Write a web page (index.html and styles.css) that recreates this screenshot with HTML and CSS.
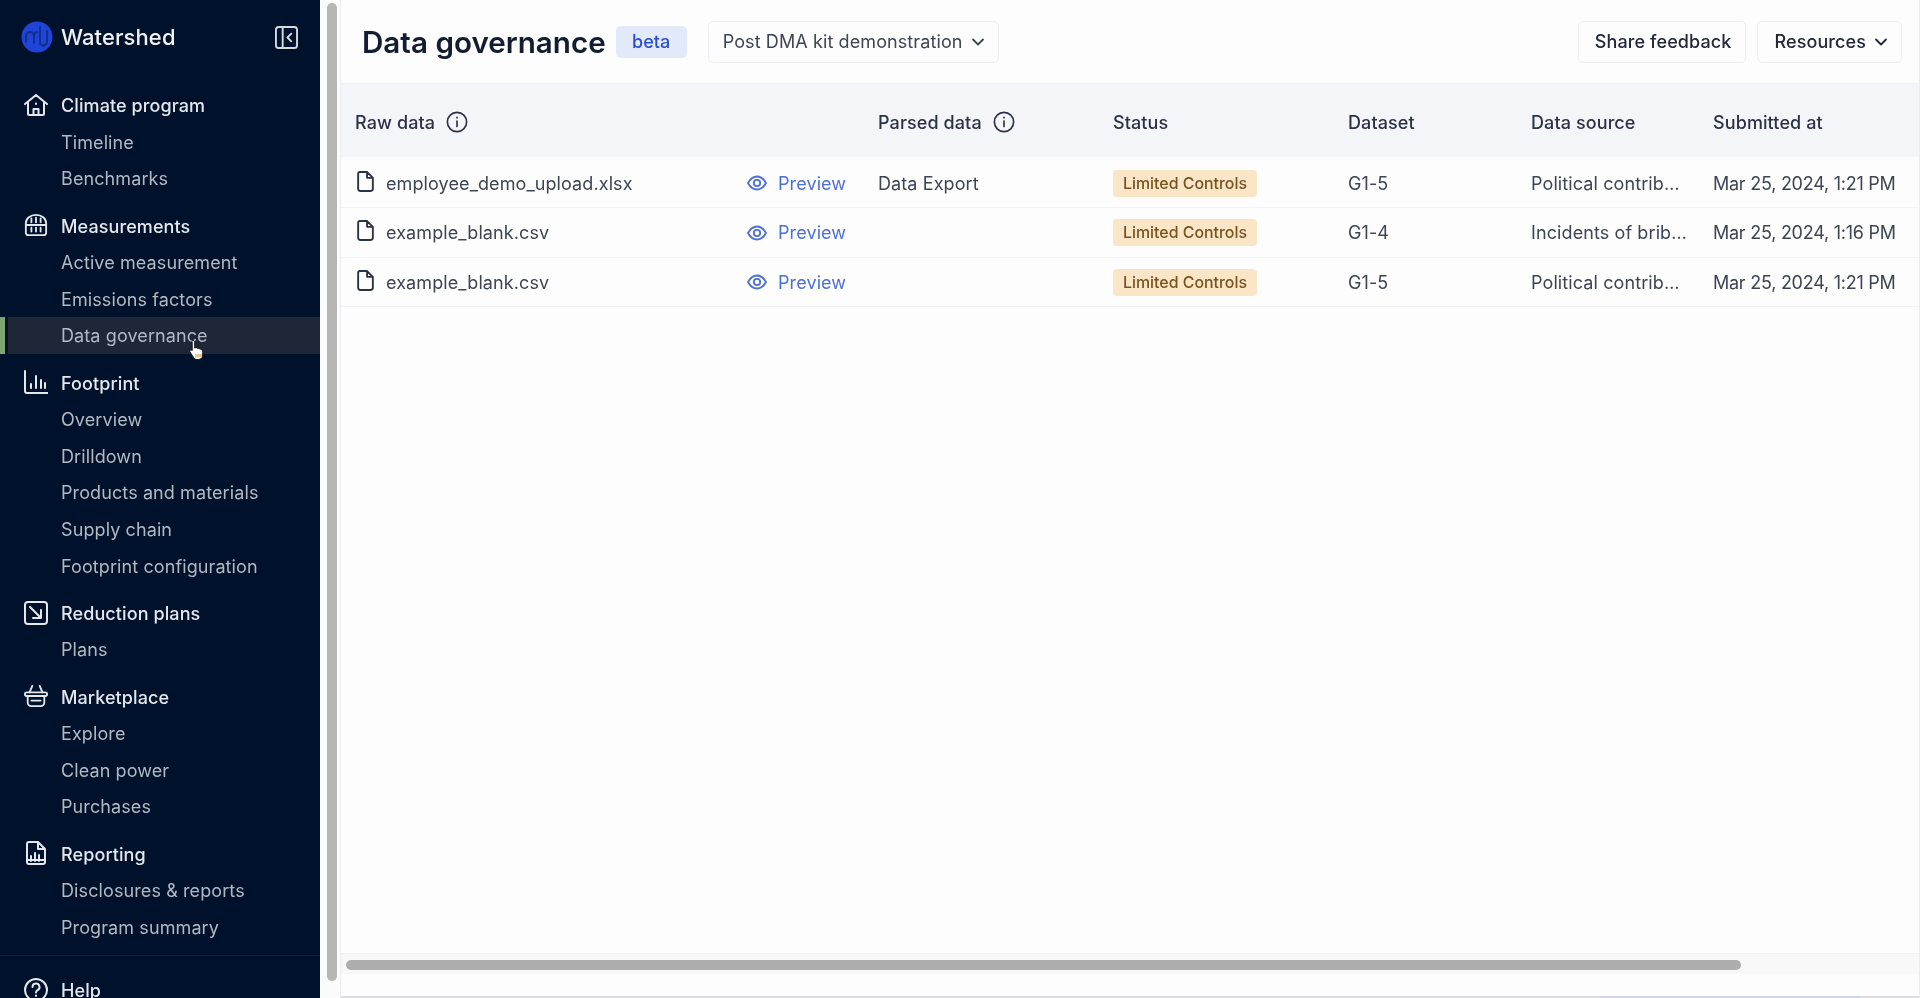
FILE: index.html
```html
<!DOCTYPE html>
<html lang="en">
<head>
<meta charset="utf-8">
<title>Data governance</title>
<link rel="stylesheet" href="styles.css">
</head>
<body>
<div class="app">
<aside class="sidebar">
  <div class="brand">
    <svg class="logo" viewBox="0 0 32 32"><circle cx="16" cy="16" r="15.500" fill="#1f45d8"/><path d="M5 21v-6a4 4 0 0 1 8 0v7M13 15a4 4 0 0 1 3-4M19 6v15a4 4 0 0 0 4 4M26 10v11a4 4 0 0 1-7 2" fill="none" stroke="#12308f" stroke-width="2"/></svg>
    <span class="brand-name">Watershed</span>
    <svg class="collapse" viewBox="0 0 24 24"><rect x="1" y="1" width="22" height="22" rx="3"/><path d="M8 1v22M17 8l-4 4 4 4"/></svg>
  </div>
  <nav class="nav">
    <section class="group">
      <div class="head"><svg viewBox="0 0 24 24"><path d="M1 11 12 2l11 9M4 9v12a1 1 0 0 0 1 1h14a1 1 0 0 0 1-1V9M9.500 22v-6h5v6M12 10.500v.5"/></svg><span>Climate program</span></div>
      <a class="item">Timeline</a>
      <a class="item">Benchmarks</a>
    </section>
    <section class="group">
      <div class="head"><svg viewBox="0 0 26 24"><path d="M2 12V10a11 9 0 0 1 22 0v2M2 12h22v8a3 3 0 0 1-3 3H5a3 3 0 0 1-3-3zM8 5v4M13 4v5M18 5v4M8 15v4M13 15v4M18 15v4"/></svg><span>Measurements</span></div>
      <a class="item">Active measurement</a>
      <a class="item">Emissions factors</a>
      <a class="item active">Data governance</a>
    </section>
    <section class="group">
      <div class="head"><svg viewBox="0 0 24 24"><path d="M1 1v20a2 2 0 0 0 2 2h21M7 14v4M12 6v12M17 10v8M21 13v5"/></svg><span>Footprint</span></div>
      <a class="item">Overview</a>
      <a class="item">Drilldown</a>
      <a class="item">Products and materials</a>
      <a class="item">Supply chain</a>
      <a class="item">Footprint configuration</a>
    </section>
    <section class="group">
      <div class="head"><svg viewBox="0 0 24 24"><rect x="1" y="1" width="22" height="22" rx="3"/><path d="m6 6 11 11M17 9v8H9"/></svg><span>Reduction plans</span></div>
      <a class="item">Plans</a>
    </section>
    <section class="group">
      <div class="head"><svg viewBox="0 0 26 24"><rect x="1" y="8" width="24" height="4" rx="2"/><path d="M4 12v7a4 4 0 0 0 4 4h10a4 4 0 0 0 4-4v-7M9 1 6 8M17 1l3 7M8 17h10"/></svg><span>Marketplace</span></div>
      <a class="item">Explore</a>
      <a class="item">Clean power</a>
      <a class="item">Purchases</a>
    </section>
    <section class="group">
      <div class="head"><svg viewBox="0 0 24 24"><path d="M3 21V3a2 2 0 0 1 2-2h9l7 7v13a2 2 0 0 1-2 2H5a2 2 0 0 1-2-2ZM14 1v7h7M7 20v-5M11 20v-8M15 20v-6M3 19h18"/></svg><span>Reporting</span></div>
      <a class="item">Disclosures &amp; reports</a>
      <a class="item">Program summary</a>
    </section>
    <section class="group help">
      <div class="head"><svg viewBox="0 0 24 24"><circle cx="12" cy="12" r="11"/><path d="M8.500 9a3.500 3.500 0 1 1 5 3.200c-1 .6-1.500 1.200-1.500 2.300M12 17.500v.5"/></svg><span>Help</span></div>
    </section>
  </nav>
  <svg class="cursor" viewBox="0 0 16 22"><path d="M4 1.500c1 0 1.700.7 1.700 1.700V9l1-.3c.8-.2 1.400.1 1.700.6.800-.3 1.500 0 1.800.6.800-.3 1.600.1 1.900.8.800-.2 1.600.4 1.600 1.300v4c0 2.500-1.800 4.500-4.500 4.500H8c-1.500 0-2.600-.7-3.400-2L1 13c-.5-.9 0-1.800.8-2 .5-.1 1 .1 1.400.5V3.200C2.300 2.200 3 1.500 4 1.500Z" fill="#fff" stroke="#10131c" stroke-width="1"/><rect x="6" y="15" width="7" height="3.500" fill="#e6c98e"/></svg>
</aside>
<div class="gutter"><div class="thumb-v"></div></div>
<main class="main">
  <header class="topbar">
    <h1 class="title">Data governance</h1>
    <span class="beta">beta</span>
    <button class="btn select">Post DMA kit demonstration<svg class="chev" viewBox="0 0 12 8"><path d="m1 1.500 5 5 5-5"/></svg></button>
    <div class="actions">
      <button class="btn">Share feedback</button>
      <button class="btn">Resources<svg class="chev" viewBox="0 0 12 8"><path d="m1 1.500 5 5 5-5"/></svg></button>
    </div>
  </header>
  <div class="table">
    <div class="row row-head">
      <div class="cell">Raw data<svg class="info" viewBox="0 0 24 24"><circle cx="12" cy="12" r="10.500"/><path d="M12 11v6M12 7v.5"/></svg></div>
      <div class="cell"></div>
      <div class="cell">Parsed data<svg class="info" viewBox="0 0 24 24"><circle cx="12" cy="12" r="10.500"/><path d="M12 11v6M12 7v.5"/></svg></div>
      <div class="cell">Status</div>
      <div class="cell">Dataset</div>
      <div class="cell">Data source</div>
      <div class="cell">Submitted at</div>
    </div>
    <div class="row row-body">
      <div class="cell"><svg class="file" viewBox="0 0 16 20"><path d="M2.500 1h7L15 6.500V17a2 2 0 0 1-2 2H3a2 2 0 0 1-2-2V2.500A1.500 1.500 0 0 1 2.500 1ZM9.500 1v5.500H15"/></svg>employee_demo_upload.xlsx</div>
      <div class="cell link"><svg class="eye" viewBox="0 0 20 16"><path d="M1 8c2.200-4 5.200-6.500 9-6.500S16.800 4 19 8c-2.200 4-5.200 6.500-9 6.500S3.200 12 1 8Z"/><circle cx="10" cy="8" r="3.200"/></svg>Preview</div>
      <div class="cell">Data Export</div>
      <div class="cell"><span class="tag">Limited Controls</span></div>
      <div class="cell">G1-5</div>
      <div class="cell">Political contrib…</div>
      <div class="cell date">Mar 25, 2024, 1:21 PM</div>
    </div>
    <div class="row row-body">
      <div class="cell"><svg class="file" viewBox="0 0 16 20"><path d="M2.500 1h7L15 6.500V17a2 2 0 0 1-2 2H3a2 2 0 0 1-2-2V2.500A1.500 1.500 0 0 1 2.500 1ZM9.500 1v5.500H15"/></svg>example_blank.csv</div>
      <div class="cell link"><svg class="eye" viewBox="0 0 20 16"><path d="M1 8c2.200-4 5.200-6.500 9-6.500S16.800 4 19 8c-2.200 4-5.200 6.500-9 6.500S3.200 12 1 8Z"/><circle cx="10" cy="8" r="3.200"/></svg>Preview</div>
      <div class="cell"></div>
      <div class="cell"><span class="tag">Limited Controls</span></div>
      <div class="cell">G1-4</div>
      <div class="cell">Incidents of brib…</div>
      <div class="cell date">Mar 25, 2024, 1:16 PM</div>
    </div>
    <div class="row row-body">
      <div class="cell"><svg class="file" viewBox="0 0 16 20"><path d="M2.500 1h7L15 6.500V17a2 2 0 0 1-2 2H3a2 2 0 0 1-2-2V2.500A1.500 1.500 0 0 1 2.500 1ZM9.500 1v5.500H15"/></svg>example_blank.csv</div>
      <div class="cell link"><svg class="eye" viewBox="0 0 20 16"><path d="M1 8c2.200-4 5.200-6.500 9-6.500S16.800 4 19 8c-2.200 4-5.200 6.500-9 6.500S3.200 12 1 8Z"/><circle cx="10" cy="8" r="3.200"/></svg>Preview</div>
      <div class="cell"></div>
      <div class="cell"><span class="tag">Limited Controls</span></div>
      <div class="cell">G1-5</div>
      <div class="cell">Political contrib…</div>
      <div class="cell date">Mar 25, 2024, 1:21 PM</div>
    </div>
  </div>
  <div class="track"><div class="thumb-h"></div></div>
  <footer class="edge"><div class="edge-mark"></div></footer>
</main>
</div>
</body>
</html>
```
FILE: styles.css
```css
* { box-sizing: border-box; }
html, body { margin: 0; height: 100%; }
body {
  overflow: hidden;
  background: #fdfdfe;
}
.app {
  display: flex;
  height: 998px;
  filter: blur(0.5px);
  font-family: Inter, "Liberation Sans", sans-serif;
  font-size: 18px;
  letter-spacing: 0.1px;
  color: #3d4454;
  background: #fdfdfe;
}
svg { fill: none; stroke: currentColor; stroke-width: 2; stroke-linecap: round; stroke-linejoin: round; flex: none; }

.sidebar {
  position: relative;
  width: 320px;
  flex: none;
  background: #00112b;
  overflow: hidden;
  color: #b3b9c4;
}
.brand {
  display: flex;
  align-items: center;
  height: 74px;
  padding: 0 22px 0 21px;
}
.logo { width: 32px; height: 32px; stroke: none; }
.brand-name { margin-left: 8px; font-size: 22px; font-weight: 500; color: #f0f2f5; }
.collapse { width: 23px; height: 23px; margin-left: auto; color: #d5d9e0; }
.nav { padding-top: 12.500px; }
.group { margin-bottom: 10.300px; }
.head {
  display: flex;
  align-items: center;
  height: 36.700px;
  padding: 2px 0 0 24px;
  font-weight: 500;
  color: #e4e7ec;
}
.head svg { width: 24px; height: 24px; margin: -2px 13px 0 0; }
.item {
  display: flex;
  align-items: center;
  height: 36.700px;
  padding: 1px 0 0 61px;
}
.item.active {
  position: relative;
  margin-left: 8px;
  padding-left: 53px;
  background: #1f2637;
}
.item.active::before {
  content: "";
  position: absolute;
  left: -8px;
  top: 0;
  bottom: 0;
  width: 5px;
  background: #7ea56f;
}
.help { margin-top: 9px; padding-top: 15px; border-top: 1px solid #131f36; }
.cursor { position: absolute; left: 189px; top: 339px; width: 16px; height: 22px; stroke: none; }

.gutter { width: 21px; flex: none; padding: 3px 3px 0 7px; background: #fbfbfb; border-right: 1px solid #ececee; }
.thumb-v { height: 978px; border-radius: 6px; background: #b6b6b6; }

.main { flex: 1; min-width: 0; display: flex; flex-direction: column; border-right: 1px solid #ececee; }
.topbar {
  display: flex;
  align-items: center;
  height: 83px;
  padding: 0 17px 0 21px;
  flex: none;
}
.title { margin: 0; font-size: 29.600px; font-weight: 600; letter-spacing: 0; color: #131c31; }
.beta {
  margin-left: 10px;
  width: 71px;
  height: 32px;
  display: flex;
  align-items: center;
  justify-content: center;
  border-radius: 5px;
  background: #e2e9f9;
  color: #2a4dc8;
  font-weight: 500;
}
.btn {
  display: flex;
  align-items: center;
  gap: 9px;
  height: 42px;
  padding: 0 14px 0 16px;
  border: 1px solid #eceef2;
  border-radius: 5px;
  background: #fdfdfe;
  font: 500 18px Inter, "Liberation Sans", sans-serif;
  letter-spacing: 0.1px;
  color: #20283a;
}
.select { margin-left: 21px; padding-left: 14px; color: #3d4454; font-weight: 400; }
.actions { margin-left: auto; display: flex; gap: 11px; }
.chev { width: 12px; height: 8px; stroke-width: 1.800; }

.table { flex: 1; min-height: 0; }
.row {
  display: grid;
  grid-template-columns: 392px 131px 235px 235px 183px 182px 1fr;
  padding-left: 14px;
}
.cell { display: flex; align-items: center; min-width: 0; white-space: nowrap; }
.date { letter-spacing: -0.25px; }
.row-head { height: 74px; padding-top: 3px; background: #f3f5f9; border-top: 1px solid #eef1f7; font-weight: 500; color: #2a3245; }
.row-body { height: 50px; border-bottom: 1px solid #f1f3f8; background: #fdfdfe; }
.row-body:nth-child(2) { height: 51px; padding-top: 2px; }
.row-body:last-child { height: 49px; }
.info { width: 22px; height: 22px; margin-left: 11px; stroke-width: 1.800; }
.file { width: 17px; height: 21px; margin: 0 12px 4px 2px; stroke-width: 1.800; color: #2a3245; }
.eye { width: 20px; height: 16px; margin-right: 11px; stroke-width: 1.800; }
.link { color: #4d6fd8; }
.tag {
  display: flex;
  align-items: center;
  height: 27px;
  padding: 0 10px;
  border-radius: 4px;
  background: #fae6c6;
  color: #77531f;
  font-size: 15.900px;
  font-weight: 500;
  letter-spacing: 0;
}
.track { flex: none; height: 21px; margin-bottom: 22px; padding: 6px 0 0 5px; background: #f8f8f8; border-top: 1px solid #f1f1f2; }
.thumb-h { width: 1395px; height: 10px; border-radius: 5px; background: #adadad; }
.edge { flex: none; height: 2px; display: flex; padding-left: 1259px; background: #dcdcde; }
.edge-mark { width: 260px; background: #cfd3e6; }
```
